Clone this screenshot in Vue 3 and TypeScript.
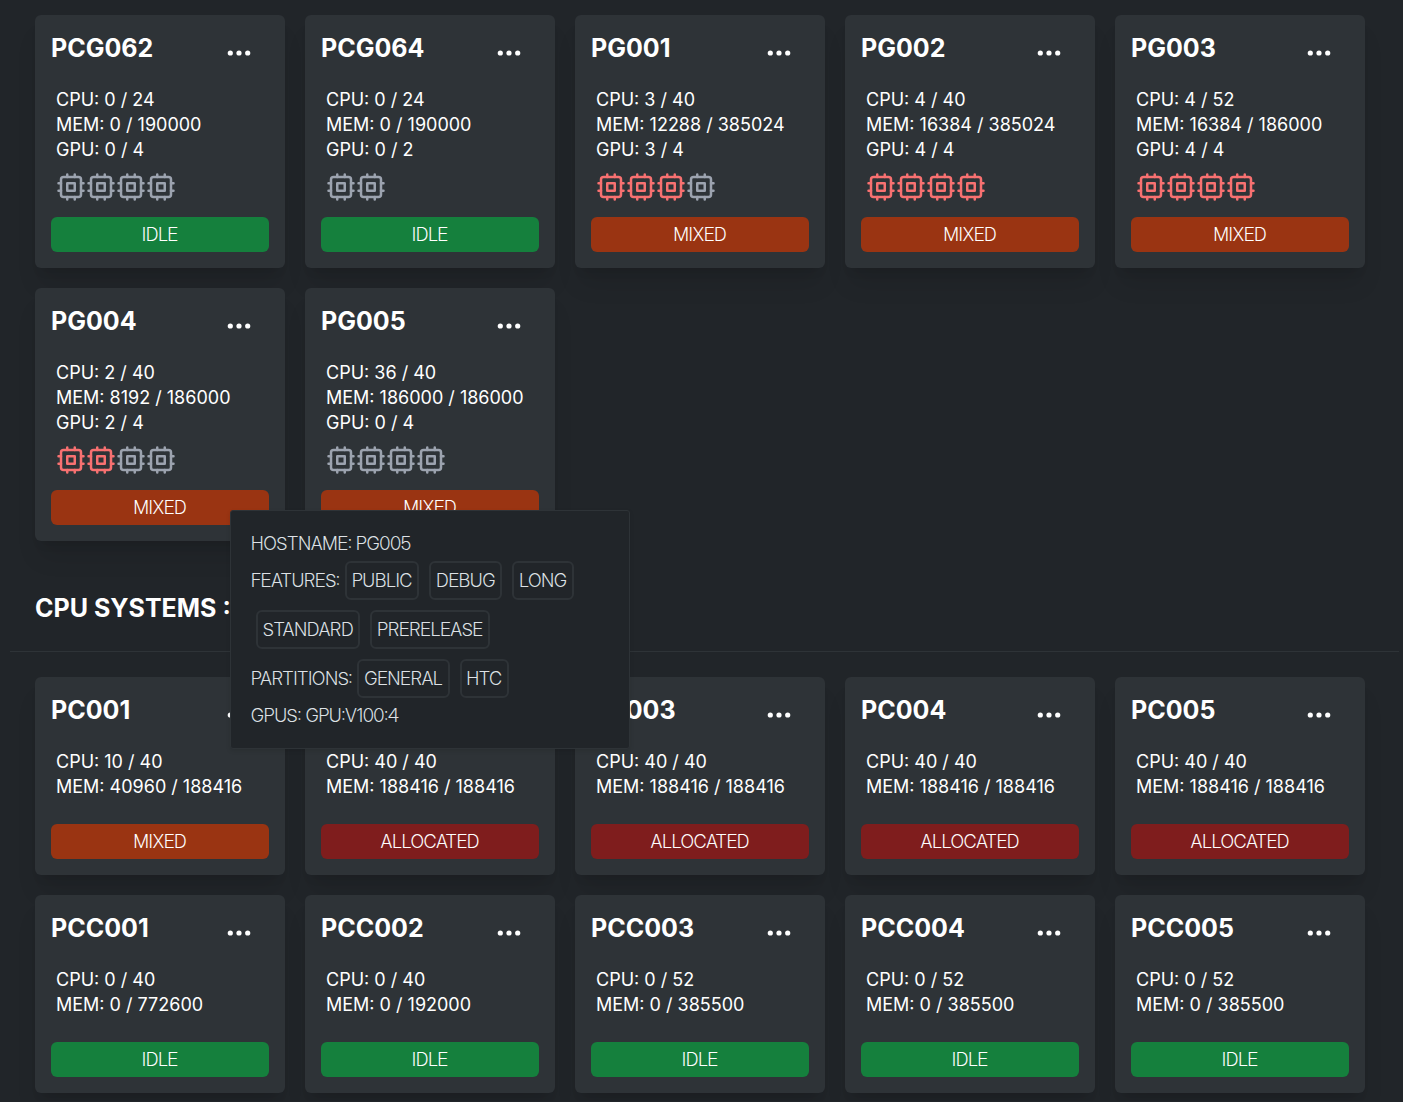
<script setup lang="ts">
interface SystemNode {
  name: string
  cpu: string
  mem: string
  gpuUsed?: number
  gpuTotal?: number
  state: 'IDLE' | 'MIXED' | 'ALLOCATED'
}

interface Group {
  id: string
  title?: string
  nodes: SystemNode[]
}

const groups: Group[] = [
  {
    id: 'gpu',
    nodes: [
      { name: 'PCG062', cpu: '0 / 24', mem: '0 / 190000', gpuUsed: 0, gpuTotal: 4, state: 'IDLE' },
      { name: 'PCG064', cpu: '0 / 24', mem: '0 / 190000', gpuUsed: 0, gpuTotal: 2, state: 'IDLE' },
      { name: 'PG001', cpu: '3 / 40', mem: '12288 / 385024', gpuUsed: 3, gpuTotal: 4, state: 'MIXED' },
      { name: 'PG002', cpu: '4 / 40', mem: '16384 / 385024', gpuUsed: 4, gpuTotal: 4, state: 'MIXED' },
      { name: 'PG003', cpu: '4 / 52', mem: '16384 / 186000', gpuUsed: 4, gpuTotal: 4, state: 'MIXED' },
      { name: 'PG004', cpu: '2 / 40', mem: '8192 / 186000', gpuUsed: 2, gpuTotal: 4, state: 'MIXED' },
      { name: 'PG005', cpu: '36 / 40', mem: '186000 / 186000', gpuUsed: 0, gpuTotal: 4, state: 'MIXED' },
    ],
  },
  {
    id: 'cpu',
    title: 'CPU SYSTEMS :',
    nodes: [
      { name: 'PC001', cpu: '10 / 40', mem: '40960 / 188416', state: 'MIXED' },
      { name: 'PC002', cpu: '40 / 40', mem: '188416 / 188416', state: 'ALLOCATED' },
      { name: 'PC003', cpu: '40 / 40', mem: '188416 / 188416', state: 'ALLOCATED' },
      { name: 'PC004', cpu: '40 / 40', mem: '188416 / 188416', state: 'ALLOCATED' },
      { name: 'PC005', cpu: '40 / 40', mem: '188416 / 188416', state: 'ALLOCATED' },
      { name: 'PCC001', cpu: '0 / 40', mem: '0 / 772600', state: 'IDLE' },
      { name: 'PCC002', cpu: '0 / 40', mem: '0 / 192000', state: 'IDLE' },
      { name: 'PCC003', cpu: '0 / 52', mem: '0 / 385500', state: 'IDLE' },
      { name: 'PCC004', cpu: '0 / 52', mem: '0 / 385500', state: 'IDLE' },
      { name: 'PCC005', cpu: '0 / 52', mem: '0 / 385500', state: 'IDLE' },
    ],
  },
]

const hovered = {
  hostname: 'PG005',
  features: ['PUBLIC', 'DEBUG', 'LONG', 'STANDARD', 'PRERELEASE'],
  partitions: ['GENERAL', 'HTC'],
  gpus: 'GPU:V100:4',
}
</script>

<template>
  <main class="page">
    <section v-for="group in groups" :key="group.id">
      <template v-if="group.title">
        <h2 class="group-title">{{ group.title }}</h2>
        <hr class="rule" />
      </template>
      <div class="grid">
        <article v-for="node in group.nodes" :key="node.name" class="card">
          <header class="card-head">
            <h3 class="name">{{ node.name }}</h3>
            <button class="more" type="button" :aria-label="`Details of ${node.name}`">
              <svg width="28" height="28" viewBox="0 0 28 28" fill="currentColor">
                <circle cx="5.300" cy="14" r="2.600" />
                <circle cx="14" cy="14" r="2.600" />
                <circle cx="22.700" cy="14" r="2.600" />
              </svg>
            </button>
          </header>
          <div class="stats">
            <p>CPU: {{ node.cpu }}</p>
            <p>MEM: {{ node.mem }}</p>
            <p v-if="node.gpuTotal">GPU: {{ node.gpuUsed }} / {{ node.gpuTotal }}</p>
          </div>
          <div v-if="node.gpuTotal" class="chips">
            <svg
              v-for="i in node.gpuTotal"
              :key="i"
              class="chip"
              :class="{ used: i <= (node.gpuUsed ?? 0) }"
              viewBox="0 0 24 24"
              fill="none"
              stroke="currentColor"
              stroke-width="2"
              stroke-linecap="round"
              stroke-linejoin="round"
            >
              <rect x="4" y="4" width="16" height="16" rx="2" />
              <rect x="9" y="9" width="6" height="6" />
              <path d="M9 2v2M15 2v2M9 20v2M15 20v2M20 9h2M20 15h2M2 9h2M2 15h2" />
            </svg>
          </div>
          <button class="state" :class="node.state.toLowerCase()" type="button">{{ node.state }}</button>
        </article>
      </div>
    </section>

    <aside class="tooltip" role="tooltip">
      <div>HOSTNAME: {{ hovered.hostname }}</div>
      <div class="tags">
        <span>FEATURES:</span>
        <span v-for="tag in hovered.features" :key="tag" class="tag">{{ tag }}</span>
      </div>
      <div class="tags">
        <span>PARTITIONS:</span>
        <span v-for="tag in hovered.partitions" :key="tag" class="tag">{{ tag }}</span>
      </div>
      <div>GPUS: {{ hovered.gpus }}</div>
    </aside>
  </main>
</template>

<style>
body {
  background: #212529;
}
</style>

<style scoped>
.page {
  position: relative;
  padding: 15px 4px 8px 10px;
  color: #fff;
  font: 400 18px/25px Inter, "Liberation Sans", sans-serif;
}

h2,
h3,
p {
  margin: 0;
}

.grid {
  display: grid;
  grid-template-columns: repeat(auto-fill, 250px);
  gap: 20px;
  padding: 0 25px;
}

.card {
  box-sizing: border-box;
  padding: 16px;
  border-radius: 6px;
  background: #2e3337;
  box-shadow: 0 20px 25px -5px rgba(0, 0, 0, 0.1), 0 8px 10px -6px rgba(0, 0, 0, 0.1);
}

.card-head {
  display: flex;
  align-items: flex-start;
  justify-content: space-between;
  height: 56px;
}

.name,
.group-title {
  font-size: 25px;
  line-height: 35px;
  font-weight: 700;
}

.more {
  display: flex;
  margin: 8px 16px 0 0;
  padding: 0;
  border: 0;
  background: none;
  color: #fff;
}

.stats {
  padding: 0 5px;
}

.chips {
  display: flex;
  margin: 10px 5px 0;
}

.chip {
  width: 30px;
  height: 30px;
  color: #9ca3af;
}

.chip.used {
  color: #f87171;
}

.state {
  display: block;
  width: 100%;
  height: 35px;
  margin-top: 15px;
  padding: 0;
  border: 0;
  border-radius: 6px;
  color: #fff;
  font: 300 18px/25px "Inter Display", Inter, "Liberation Sans", sans-serif;
}

.stats + .state {
  margin-top: 25px;
}

.idle {
  background: #15803d;
}

.mixed {
  background: #9a3412;
}

.allocated {
  background: #7f1d1d;
}

.group-title {
  padding: 50px 25px 0;
}

.rule {
  height: 1px;
  margin: 25px 0;
  border: 0;
  background: #2e3337;
}

.tooltip {
  position: absolute;
  top: 510px;
  left: 230px;
  box-sizing: border-box;
  width: 400px;
  padding: 20px;
  border: 1px solid #2e3337;
  border-radius: 3px;
  background: #212529;
  box-shadow: 0 2px 4px rgba(0, 0, 0, 0.1);
  color: #dee2e6;
  font: 300 18px/25px "Inter Display", Inter, "Liberation Sans", sans-serif;
}

.tags {
  display: flex;
  flex-wrap: wrap;
  align-items: center;
}

.tag {
  margin: 5px;
  padding: 5px;
  border: 2px solid #2e3337;
  border-radius: 6px;
}
</style>
